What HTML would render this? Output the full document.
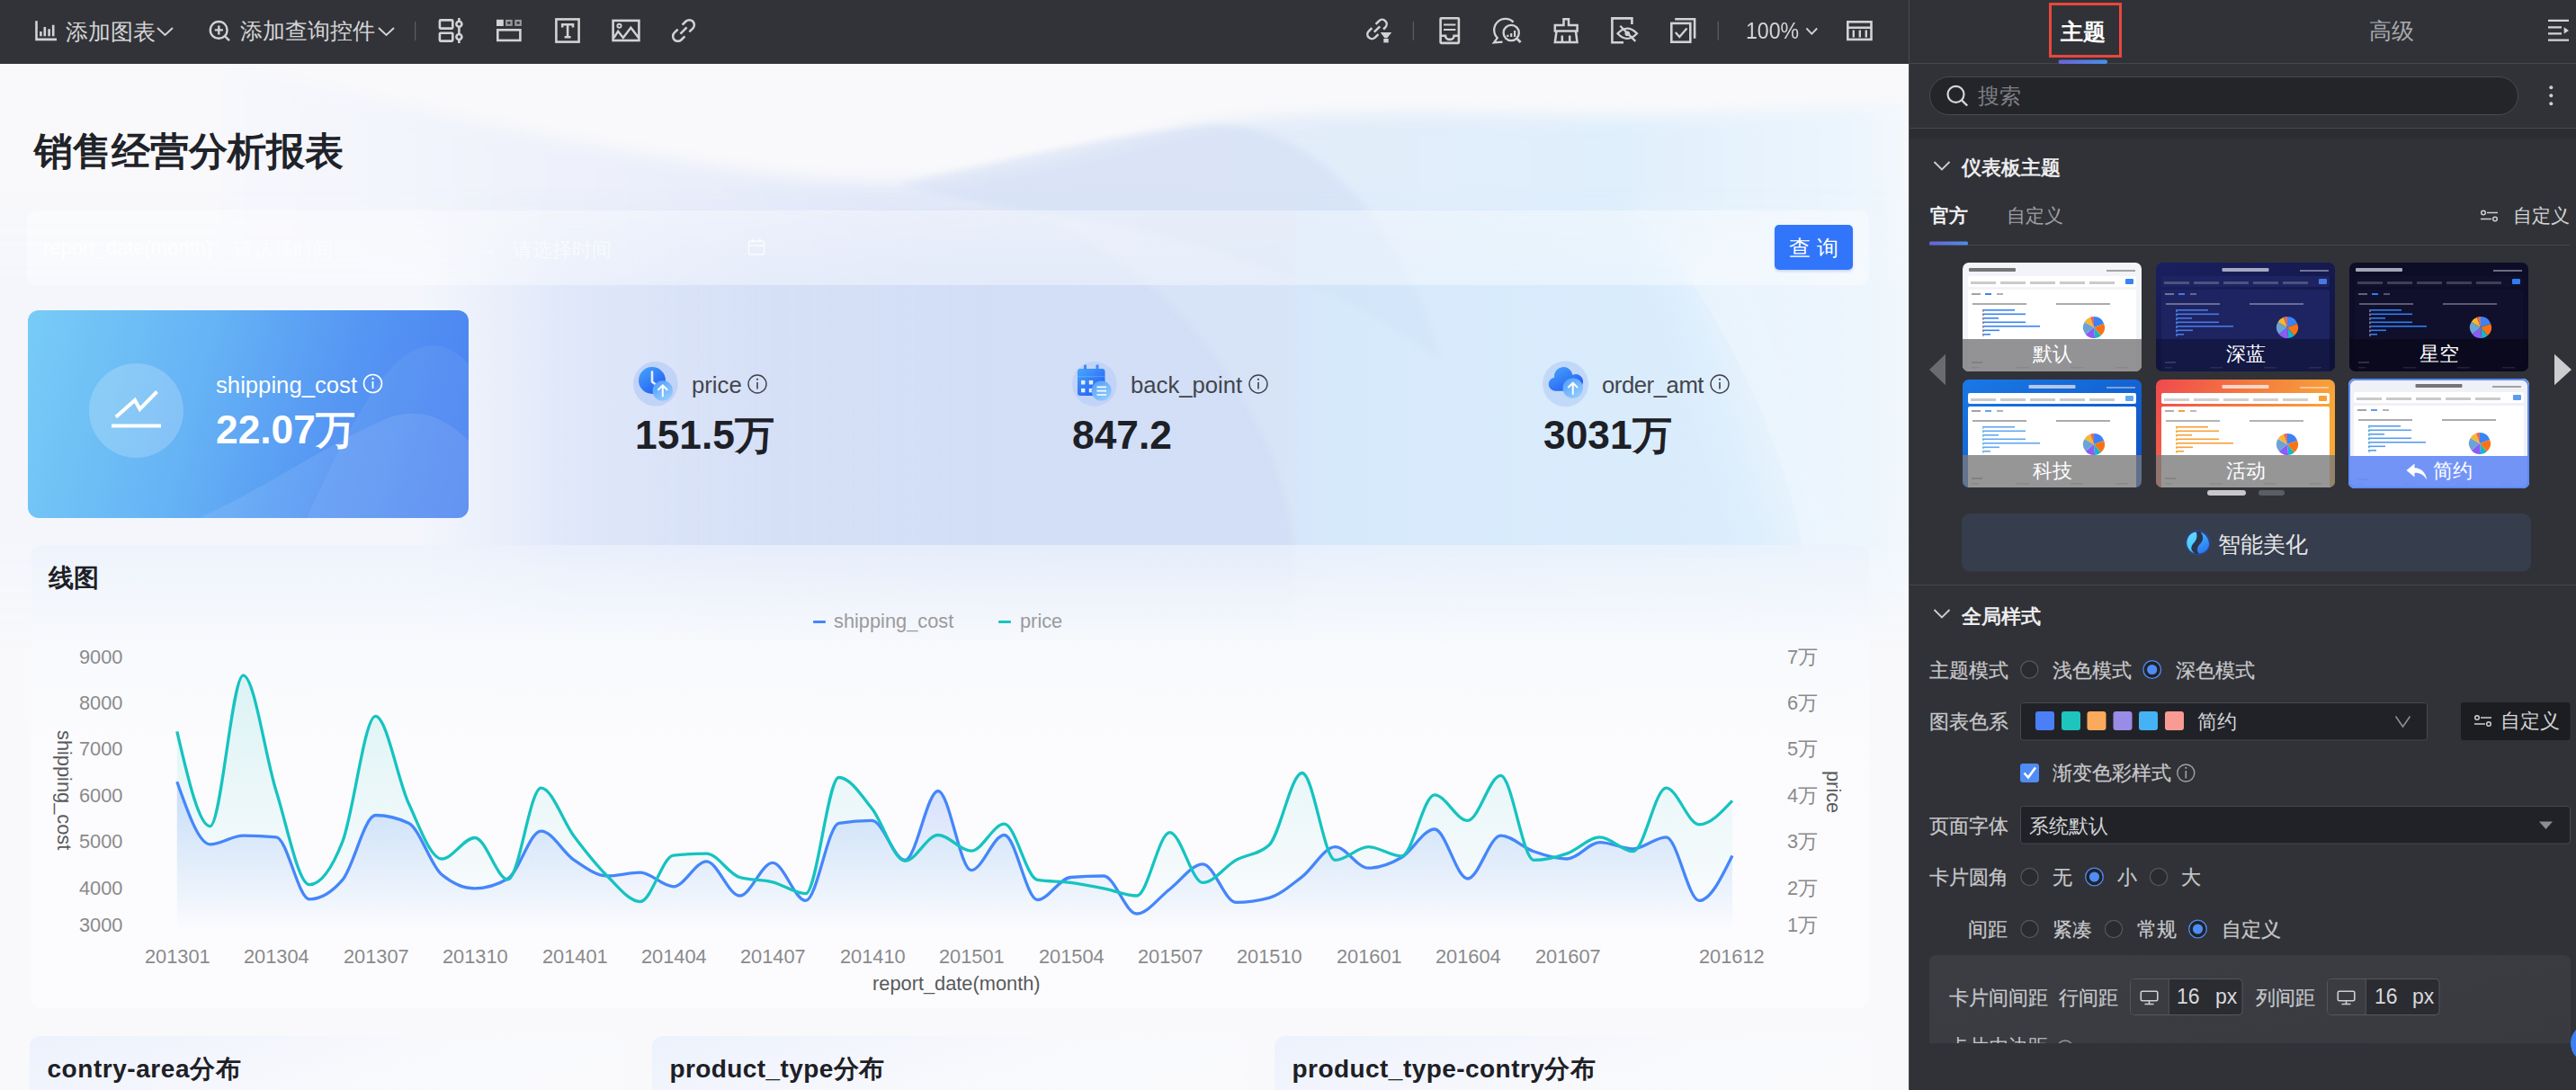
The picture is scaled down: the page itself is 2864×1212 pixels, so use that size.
<!DOCTYPE html>
<html><head><meta charset="utf-8">
<style>
*{box-sizing:border-box;margin:0;padding:0}
html,body{width:2864px;height:1212px;overflow:hidden;font-family:"Liberation Sans",sans-serif;background:#f9f9fb}
.a{position:absolute;white-space:nowrap}
.tb{color:#d4d4d6;font-size:25px;line-height:36px}
#toolbar{position:absolute;left:0;top:0;width:2122px;height:70.5px;background:#323338}
#panel{position:absolute;left:2122px;top:0;width:742px;height:1212px;background:#313237;border-left:1px solid #4a4b50}
#dash{position:absolute;left:0;top:0;width:2122px;height:1212px;background:#f7f8fc;overflow:hidden}
.kname{font-size:25.7px;color:#333740}
.kval{font-size:44.3px;font-weight:bold;color:#1d2026}
.card{position:absolute;background:linear-gradient(160deg,rgba(236,241,252,0.95) 0%,rgba(248,249,253,0.9) 50%,rgba(250,250,252,0.9) 100%);border-radius:12px}
.ctitle{font-size:28px;font-weight:bold;color:#1d2026}
.axl{font-size:21.8px;color:#8a8a8c;line-height:26px}
</style></head><body>
<div id="dash">
  <svg class="a" style="left:0;top:0" width="2122" height="1212">
    <defs>
      <filter id="bl2" x="-20%" y="-20%" width="140%" height="140%"><feGaussianBlur stdDeviation="3"/></filter>
      <filter id="bl3" x="-30%" y="-30%" width="160%" height="160%"><feGaussianBlur stdDeviation="25"/></filter>
      <filter id="bl4" x="-10%" y="-30%" width="120%" height="160%"><feGaussianBlur stdDeviation="9"/></filter>
      <linearGradient id="band" x1="0" y1="0" x2="2122" y2="0" gradientUnits="userSpaceOnUse">
        <stop offset="0.22" stop-color="#f4f6fc"/>
        <stop offset="0.30" stop-color="#dfe7f9"/>
        <stop offset="0.40" stop-color="#d8e2f8"/>
        <stop offset="0.67" stop-color="#d7e3f7"/>
        <stop offset="0.70" stop-color="#dbeafb"/>
        <stop offset="0.85" stop-color="#e0effc"/>
        <stop offset="0.95" stop-color="#e8f4fd"/>
        <stop offset="1" stop-color="#f3f8fd"/>
      </linearGradient>
      <linearGradient id="vfade" x1="0" y1="0" x2="0" y2="1212" gradientUnits="userSpaceOnUse">
        <stop offset="0.17" stop-color="#fff" stop-opacity="0"/>
        <stop offset="0.26" stop-color="#fff" stop-opacity="1"/>
        <stop offset="0.50" stop-color="#fff" stop-opacity="1"/>
        <stop offset="0.60" stop-color="#fff" stop-opacity="0"/>
      </linearGradient>
      <mask id="mband"><rect x="0" y="0" width="2122" height="1212" fill="url(#vfade)"/></mask>
      <linearGradient id="head" x1="0" y1="0" x2="2122" y2="0" gradientUnits="userSpaceOnUse">
        <stop offset="0.12" stop-color="#f7f8fd"/>
        <stop offset="0.30" stop-color="#eef1fb"/>
        <stop offset="0.45" stop-color="#e4eaf9"/>
        <stop offset="0.62" stop-color="#e3ebf8"/>
        <stop offset="0.85" stop-color="#e0effc"/>
        <stop offset="0.97" stop-color="#ecf5fd"/>
        <stop offset="1" stop-color="#f4f8fd"/>
      </linearGradient>
      <linearGradient id="vhead" x1="0" y1="0" x2="0" y2="1212" gradientUnits="userSpaceOnUse">
        <stop offset="0.06" stop-color="#fff" stop-opacity="0.3"/>
        <stop offset="0.17" stop-color="#fff" stop-opacity="1"/>
        <stop offset="0.3" stop-color="#fff" stop-opacity="1"/>
      </linearGradient>
      <mask id="mhead"><rect x="0" y="0" width="2122" height="1212" fill="url(#vhead)"/></mask>
      <linearGradient id="hfade" x1="0" y1="0" x2="2122" y2="0" gradientUnits="userSpaceOnUse">
        <stop offset="0.33" stop-color="#fff" stop-opacity="0"/>
        <stop offset="0.52" stop-color="#fff" stop-opacity="1"/>
      </linearGradient>
      <mask id="mleft"><rect x="0" y="0" width="2122" height="1212" fill="url(#hfade)"/></mask>
    </defs>
    <rect x="0" y="0" width="2122" height="1212" fill="#f9f9fb"/>
    <path d="M250,70 C500,130 800,200 972,203 C1100,204 1230,165 1325,141 C1420,125 1560,125 1700,128 C1900,132 2050,120 2122,112 L2122,340 L250,340 Z" fill="url(#head)" filter="url(#bl4)"/>
    <rect x="0" y="180" width="2122" height="560" fill="url(#band)" mask="url(#mband)"/>
    <g mask="url(#mleft)">
      <path d="M600,260 C850,240 1000,232 1144,235 C1300,300 1420,450 1439,610 L1439,700 L600,700 Z" fill="#c9d7f3" opacity="0.35" filter="url(#bl2)" mask="url(#mband)"/>
      <path d="M1000,205 C1150,170 1250,150 1325,141 C1430,125 1540,200 1601,400 C1500,320 1300,250 1144,235 C1080,225 1040,215 1000,205 Z" fill="#cfdcf4" opacity="0.45" filter="url(#bl2)"/>
    </g>
    <path d="M1440,136 C1560,128 1640,128 1700,136 C1800,190 1900,320 1955,450 C1985,520 1998,570 2005,620 L1440,620 Z" fill="#d2e9fc" opacity="0.45" mask="url(#mband)"/>
    <path d="M1751,157 C1850,250 1900,350 1925,446 C1960,560 1980,600 1990,640 L2122,640 L2122,150 Z" fill="#eef6fd" opacity="0.6" filter="url(#bl3)" mask="url(#mband)"/>
  </svg>

  <div class="a" style="left:38px;top:140px;font-size:43px;font-weight:bold;color:#1f2329">销售经营分析报表</div>

  <!-- filter bar -->
  <div class="a" style="left:30px;top:234px;width:2048px;height:83px;background:rgba(255,255,255,0.38);border-radius:10px"></div>
  <div class="a" style="left:48px;top:263px;font-size:22px;color:rgba(255,255,255,0.95)">report_date(month)</div>
  <div class="a" style="left:260px;top:263px;font-size:22px;color:rgba(255,255,255,0.6)">请选择时间</div>
  <div class="a" style="left:531px;top:263px;font-size:22px;color:rgba(255,255,255,0.6)">→</div>
  <div class="a" style="left:570px;top:263px;font-size:22px;color:rgba(255,255,255,0.6)">请选择时间</div>
  <svg class="a" style="left:831px;top:264px" width="20" height="22"><rect x="1.5" y="4" width="17" height="15" rx="1.5" fill="none" stroke="rgba(255,255,255,0.75)" stroke-width="1.5"/><path d="M1.5,9 H18.5 M6,1.5 V5.5 M14,1.5 V5.5" stroke="rgba(255,255,255,0.75)" stroke-width="1.5"/></svg>
  <div class="a" style="left:1973px;top:250px;width:87px;height:50px;background:#3175fb;border-radius:5px;box-shadow:0 2px 3px rgba(40,90,200,0.2);color:#fff;font-size:24px;line-height:52px;text-align:center;letter-spacing:7px;text-indent:7px">查询</div>

  <!-- KPI 1 -->
  <div class="a" style="left:31px;top:345px;width:490px;height:231px;border-radius:12px;overflow:hidden;background:linear-gradient(105deg,#77ccf6 0%,#66b3f5 38%,#5596f3 68%,#4a82f1 100%)">
    <svg class="a" style="left:0;top:0" width="490" height="231">
      <path d="M190,231 C260,200 330,150 400,120 C440,105 470,125 490,145 L490,231 Z" fill="rgba(255,255,255,0.09)"/>
      <path d="M310,231 C360,120 400,50 440,40 C465,35 480,50 490,60 L490,231 Z" fill="rgba(255,255,255,0.06)"/>
      <rect x="0" y="0" width="490" height="231" fill="rgba(90,110,230,0.0)"/>
    </svg>
  </div>
  <div class="a" style="left:98.5px;top:404px;width:105px;height:105px;border-radius:50%;background:rgba(255,255,255,0.2)"></div>
  <svg class="a" style="left:0;top:0" width="300" height="600"><polyline points="128.8,463.7 150,445 155.5,455 174.5,435.5" fill="none" stroke="#fff" stroke-width="4"/><line x1="124" y1="473.5" x2="179" y2="473.5" stroke="#fff" stroke-width="4.2"/></svg>
  <div class="a kname" style="left:240px;top:414px;color:#fff">shipping_cost</div>
  <svg class="a" style="left:403px;top:415px" width="23" height="23"><circle cx="11.5" cy="11.5" r="10" fill="none" stroke="#fff" stroke-width="1.6"/><line x1="11.5" y1="9" x2="11.5" y2="17" stroke="#fff" stroke-width="1.8"/><circle cx="11.5" cy="6" r="1.2" fill="#fff"/></svg>
  <div class="a kval" style="left:240px;top:448.3px;color:#fff">22.07万</div>

  <!-- KPI 2..4 -->
  <svg class="a" style="left:0;top:0" width="2122" height="600">
    <defs>
      <linearGradient id="ic1" x1="0" y1="0" x2="0.8" y2="1"><stop offset="0" stop-color="#47a8fb"/><stop offset="1" stop-color="#2358f4"/></linearGradient>
      <linearGradient id="ic2" x1="0" y1="0" x2="0.7" y2="1"><stop offset="0" stop-color="#4b9cfb"/><stop offset="1" stop-color="#93ccff"/></linearGradient>
    </defs>
    <circle cx="728.9" cy="426.8" r="24.8" fill="#c2d3f8"/>
    <circle cx="725" cy="423" r="15" fill="url(#ic1)"/>
    <path d="M725,413.5 V424.5 L729,427.5" fill="none" stroke="#e4f1ff" stroke-width="2.6" stroke-linecap="round" stroke-linejoin="round"/>
    <circle cx="736.8" cy="434.5" r="11.2" fill="url(#ic2)" opacity="0.97"/>
    <path d="M736.8,440.5 V428.8 M732,433.2 L736.8,428.5 L741.6,433.2" fill="none" stroke="#fff" stroke-width="2" stroke-linecap="round"/>

    <circle cx="1216.9" cy="426.9" r="24.8" fill="#c2d3f8"/>
    <path d="M1201,410 H1225.5 A3,3 0 0 1 1228.5,413 V437 A3,3 0 0 1 1225.5,440 H1201 A3,3 0 0 1 1198,437 V413 A3,3 0 0 1 1201,410 Z" fill="url(#ic1)"/>
    <rect x="1205" y="405.5" width="3" height="6" rx="1" fill="#3b8cf7"/><rect x="1218.5" y="405.5" width="3" height="6" rx="1" fill="#3b8cf7"/>
    <path d="M1198,418.7 H1228.5" stroke="#e8f1ff" stroke-width="0.6" opacity="0.4"/>
    <rect x="1202" y="423" width="4.4" height="4.5" fill="#e3eeff"/><rect x="1210.8" y="423" width="4.4" height="4.5" fill="#e3eeff"/>
    <rect x="1202" y="431.9" width="4.4" height="4.4" fill="#e3eeff"/><rect x="1210.8" y="431.9" width="4.4" height="4.4" fill="#e3eeff"/>
    <circle cx="1224.6" cy="434.6" r="11" fill="url(#ic2)"/>
    <path d="M1219.5,430.3 H1230 M1219.5,434.6 H1230 M1219.5,439 H1230" stroke="#fff" stroke-width="1.7"/>

    <circle cx="1740.5" cy="426.9" r="25.4" fill="#c2d8f8"/>
    <path d="M1729,434.7 A7.5,7.5 0 0 1 1728,419.8 A10,10 0 0 1 1748.5,417 A8,8 0 0 1 1759.5,427 A7.5,7.5 0 0 1 1752,434.7 Z" fill="url(#ic1)"/>
    <circle cx="1748.75" cy="431.6" r="11.2" fill="url(#ic2)"/>
    <path d="M1748.75,438 V426 M1744,430.5 L1748.75,425.7 L1753.5,430.5" fill="none" stroke="#fff" stroke-width="2" stroke-linecap="round"/>
  </svg>
<svg class="a" style="left:830.4px;top:414.8px" width="24" height="24"><circle cx="12" cy="12" r="10" fill="none" stroke="#3e4149" stroke-width="1.4"/><line x1="12" y1="10" x2="12" y2="17.5" stroke="#3e4149" stroke-width="1.6"/><circle cx="12" cy="6.8" r="1.1" fill="#3e4149"/></svg><svg class="a" style="left:1386.5px;top:414.6px" width="24" height="24"><circle cx="12" cy="12" r="10" fill="none" stroke="#3e4149" stroke-width="1.4"/><line x1="12" y1="10" x2="12" y2="17.5" stroke="#3e4149" stroke-width="1.6"/><circle cx="12" cy="6.8" r="1.1" fill="#3e4149"/></svg><svg class="a" style="left:1900px;top:414.7px" width="24" height="24"><circle cx="12" cy="12" r="10" fill="none" stroke="#3e4149" stroke-width="1.4"/><line x1="12" y1="10" x2="12" y2="17.5" stroke="#3e4149" stroke-width="1.6"/><circle cx="12" cy="6.8" r="1.1" fill="#3e4149"/></svg>
  <div class="a kname" style="left:769px;top:414px;color:#42454c">price</div>
  <div class="a kval" style="left:706px;top:454px">151.5万</div>
  <div class="a kname" style="left:1257px;top:414px;color:#42454c">back_point</div>
  <div class="a kval" style="left:1192px;top:458.7px">847.2</div>
  <div class="a kname" style="left:1781px;top:414px;color:#42454c;letter-spacing:-0.45px">order_amt</div>
  <div class="a kval" style="left:1716px;top:454px">3031万</div>
  <!-- chart card -->
  <div class="card" style="left:35px;top:605.5px;width:2043px;height:515px;background:linear-gradient(180deg,rgba(236,242,252,0.75) 0%,rgba(248,250,253,0.8) 22%,rgba(252,252,254,0.88) 45%,rgba(252,252,254,0.9) 100%)"></div>
  <div class="a ctitle" style="left:53.5px;top:624px">线图</div>
  <svg class="a" style="left:0;top:0" width="2122" height="1212">
    <defs>
      <linearGradient id="gb" x1="0" y1="0" x2="0" y2="1"><stop offset="0" stop-color="#4a7ef5" stop-opacity="0.22"/><stop offset="1" stop-color="#4a7ef5" stop-opacity="0.0"/></linearGradient>
      <linearGradient id="gt" x1="0" y1="0" x2="0" y2="1"><stop offset="0" stop-color="#1fc0bd" stop-opacity="0.14"/><stop offset="1" stop-color="#1fc0bd" stop-opacity="0.0"/></linearGradient>
    </defs>
    <path d="M196.8,869.2 C209.1,904.0 221.3,938.8 233.6,938.8 C245.9,938.8 258.1,929.1 270.4,929.1 C282.6,929.1 294.9,929.7 307.2,930.9 C319.4,932.1 331.7,999.9 344.0,999.9 C356.2,999.9 368.5,992.7 380.8,978.4 C393.0,964.1 405.3,906.5 417.5,906.5 C429.8,906.5 442.1,909.4 454.3,915.3 C466.6,921.2 478.9,962.5 491.1,972.6 C503.4,982.7 515.7,987.8 527.9,987.8 C540.2,987.8 552.5,984.2 564.7,977.0 C577.0,969.8 589.2,924.1 601.5,924.1 C613.8,924.1 626.0,948.1 638.3,956.4 C650.6,964.7 662.8,974.0 675.1,974.0 C687.4,974.0 699.6,970.2 711.9,970.2 C724.1,970.2 736.4,985.8 748.7,985.8 C760.9,985.8 773.2,957.9 785.5,957.9 C797.7,957.9 810.0,996.0 822.3,996.0 C834.5,996.0 846.8,959.4 859.0,959.4 C871.3,959.4 883.6,1001.4 895.8,1001.4 C908.1,1001.4 920.4,917.2 932.6,915.3 C944.9,913.4 957.2,912.4 969.4,912.4 C981.7,912.4 993.9,956.4 1006.2,956.4 C1018.5,956.4 1030.7,879.5 1043.0,879.5 C1055.3,879.5 1067.5,967.6 1079.8,967.6 C1092.1,967.6 1104.3,928.5 1116.6,928.5 C1128.9,928.5 1141.1,1000.5 1153.4,1000.5 C1165.6,1000.5 1177.9,976.5 1190.2,975.5 C1202.4,974.5 1214.7,974.0 1227.0,974.0 C1239.2,974.0 1251.5,1016.0 1263.8,1016.0 C1276.0,1016.0 1288.3,997.9 1300.5,988.7 C1312.8,979.5 1325.1,960.8 1337.3,960.8 C1349.6,960.8 1361.9,1003.4 1374.1,1003.4 C1386.4,1003.4 1398.7,1001.7 1410.9,998.4 C1423.2,995.1 1435.4,984.3 1447.7,974.9 C1460.0,965.5 1472.2,941.7 1484.5,941.7 C1496.8,941.7 1509.0,965.2 1521.3,965.2 C1533.6,965.2 1545.8,960.7 1558.1,953.5 C1570.3,946.3 1582.6,922.0 1594.9,922.0 C1607.1,922.0 1619.4,977.0 1631.7,977.0 C1643.9,977.0 1656.2,929.1 1668.5,929.1 C1680.7,929.1 1693.0,942.4 1705.3,946.7 C1717.5,951.0 1729.8,955.0 1742.0,955.0 C1754.3,955.0 1766.6,936.7 1778.8,936.7 C1791.1,936.7 1803.4,943.8 1815.6,943.8 C1827.9,943.8 1840.2,930.9 1852.4,930.9 C1864.7,930.9 1876.9,1001.4 1889.2,1001.4 C1901.5,1001.4 1913.7,976.4 1926.0,951.4 L1926,1036 L196.8,1036 Z" fill="url(#gb)"/>
    <path d="M196.8,813.4 C209.1,866.1 221.3,918.8 233.6,918.8 C245.9,918.8 258.1,750.8 270.4,750.8 C282.6,750.8 294.9,841.2 307.2,880.0 C319.4,918.8 331.7,983.7 344.0,983.7 C356.2,983.7 368.5,967.1 380.8,935.9 C393.0,904.7 405.3,796.4 417.5,796.4 C429.8,796.4 442.1,866.9 454.3,893.3 C466.6,919.7 478.9,955.0 491.1,955.0 C503.4,955.0 515.7,931.5 527.9,931.5 C540.2,931.5 552.5,977.9 564.7,977.9 C577.0,977.9 589.2,876.2 601.5,876.2 C613.8,876.2 626.0,913.7 638.3,930.0 C650.6,946.3 662.8,961.9 675.1,974.0 C687.4,986.1 699.6,1002.5 711.9,1002.5 C724.1,1002.5 736.4,952.4 748.7,951.1 C760.9,949.8 773.2,949.1 785.5,949.1 C797.7,949.1 810.0,972.0 822.3,975.5 C834.5,979.0 846.8,977.8 859.0,980.8 C871.3,983.8 883.6,993.7 895.8,993.7 C908.1,993.7 920.4,864.5 932.6,864.5 C944.9,864.5 957.2,883.6 969.4,899.1 C981.7,914.6 993.9,957.3 1006.2,957.3 C1018.5,957.3 1030.7,928.5 1043.0,928.5 C1055.3,928.5 1067.5,946.1 1079.8,946.1 C1092.1,946.1 1104.3,916.2 1116.6,916.2 C1128.9,916.2 1141.1,976.4 1153.4,978.4 C1165.6,980.4 1177.9,979.8 1190.2,981.4 C1202.4,983.0 1214.7,985.4 1227.0,987.8 C1239.2,990.2 1251.5,996.0 1263.8,996.0 C1276.0,996.0 1288.3,925.6 1300.5,925.6 C1312.8,925.6 1325.1,981.4 1337.3,981.4 C1349.6,981.4 1361.9,963.3 1374.1,956.4 C1386.4,949.5 1398.7,950.8 1410.9,939.7 C1423.2,928.6 1435.4,859.5 1447.7,859.5 C1460.0,859.5 1472.2,956.4 1484.5,956.4 C1496.8,956.4 1509.0,941.7 1521.3,941.7 C1533.6,941.7 1545.8,952.0 1558.1,952.0 C1570.3,952.0 1582.6,883.9 1594.9,883.9 C1607.1,883.9 1619.4,912.4 1631.7,912.4 C1643.9,912.4 1656.2,862.4 1668.5,862.4 C1680.7,862.4 1693.0,956.4 1705.3,956.4 C1717.5,956.4 1729.8,953.4 1742.0,949.1 C1754.3,944.9 1766.6,930.9 1778.8,930.9 C1791.1,930.9 1803.4,946.7 1815.6,946.7 C1827.9,946.7 1840.2,876.2 1852.4,876.2 C1864.7,876.2 1876.9,916.8 1889.2,916.8 C1901.5,916.8 1913.7,903.5 1926.0,890.3 L1926,1036 L196.8,1036 Z" fill="url(#gt)"/>
    <path d="M196.8,869.2 C209.1,904.0 221.3,938.8 233.6,938.8 C245.9,938.8 258.1,929.1 270.4,929.1 C282.6,929.1 294.9,929.7 307.2,930.9 C319.4,932.1 331.7,999.9 344.0,999.9 C356.2,999.9 368.5,992.7 380.8,978.4 C393.0,964.1 405.3,906.5 417.5,906.5 C429.8,906.5 442.1,909.4 454.3,915.3 C466.6,921.2 478.9,962.5 491.1,972.6 C503.4,982.7 515.7,987.8 527.9,987.8 C540.2,987.8 552.5,984.2 564.7,977.0 C577.0,969.8 589.2,924.1 601.5,924.1 C613.8,924.1 626.0,948.1 638.3,956.4 C650.6,964.7 662.8,974.0 675.1,974.0 C687.4,974.0 699.6,970.2 711.9,970.2 C724.1,970.2 736.4,985.8 748.7,985.8 C760.9,985.8 773.2,957.9 785.5,957.9 C797.7,957.9 810.0,996.0 822.3,996.0 C834.5,996.0 846.8,959.4 859.0,959.4 C871.3,959.4 883.6,1001.4 895.8,1001.4 C908.1,1001.4 920.4,917.2 932.6,915.3 C944.9,913.4 957.2,912.4 969.4,912.4 C981.7,912.4 993.9,956.4 1006.2,956.4 C1018.5,956.4 1030.7,879.5 1043.0,879.5 C1055.3,879.5 1067.5,967.6 1079.8,967.6 C1092.1,967.6 1104.3,928.5 1116.6,928.5 C1128.9,928.5 1141.1,1000.5 1153.4,1000.5 C1165.6,1000.5 1177.9,976.5 1190.2,975.5 C1202.4,974.5 1214.7,974.0 1227.0,974.0 C1239.2,974.0 1251.5,1016.0 1263.8,1016.0 C1276.0,1016.0 1288.3,997.9 1300.5,988.7 C1312.8,979.5 1325.1,960.8 1337.3,960.8 C1349.6,960.8 1361.9,1003.4 1374.1,1003.4 C1386.4,1003.4 1398.7,1001.7 1410.9,998.4 C1423.2,995.1 1435.4,984.3 1447.7,974.9 C1460.0,965.5 1472.2,941.7 1484.5,941.7 C1496.8,941.7 1509.0,965.2 1521.3,965.2 C1533.6,965.2 1545.8,960.7 1558.1,953.5 C1570.3,946.3 1582.6,922.0 1594.9,922.0 C1607.1,922.0 1619.4,977.0 1631.7,977.0 C1643.9,977.0 1656.2,929.1 1668.5,929.1 C1680.7,929.1 1693.0,942.4 1705.3,946.7 C1717.5,951.0 1729.8,955.0 1742.0,955.0 C1754.3,955.0 1766.6,936.7 1778.8,936.7 C1791.1,936.7 1803.4,943.8 1815.6,943.8 C1827.9,943.8 1840.2,930.9 1852.4,930.9 C1864.7,930.9 1876.9,1001.4 1889.2,1001.4 C1901.5,1001.4 1913.7,976.4 1926.0,951.4" fill="none" stroke="#4586fa" stroke-width="3.3"/>
    <path d="M196.8,813.4 C209.1,866.1 221.3,918.8 233.6,918.8 C245.9,918.8 258.1,750.8 270.4,750.8 C282.6,750.8 294.9,841.2 307.2,880.0 C319.4,918.8 331.7,983.7 344.0,983.7 C356.2,983.7 368.5,967.1 380.8,935.9 C393.0,904.7 405.3,796.4 417.5,796.4 C429.8,796.4 442.1,866.9 454.3,893.3 C466.6,919.7 478.9,955.0 491.1,955.0 C503.4,955.0 515.7,931.5 527.9,931.5 C540.2,931.5 552.5,977.9 564.7,977.9 C577.0,977.9 589.2,876.2 601.5,876.2 C613.8,876.2 626.0,913.7 638.3,930.0 C650.6,946.3 662.8,961.9 675.1,974.0 C687.4,986.1 699.6,1002.5 711.9,1002.5 C724.1,1002.5 736.4,952.4 748.7,951.1 C760.9,949.8 773.2,949.1 785.5,949.1 C797.7,949.1 810.0,972.0 822.3,975.5 C834.5,979.0 846.8,977.8 859.0,980.8 C871.3,983.8 883.6,993.7 895.8,993.7 C908.1,993.7 920.4,864.5 932.6,864.5 C944.9,864.5 957.2,883.6 969.4,899.1 C981.7,914.6 993.9,957.3 1006.2,957.3 C1018.5,957.3 1030.7,928.5 1043.0,928.5 C1055.3,928.5 1067.5,946.1 1079.8,946.1 C1092.1,946.1 1104.3,916.2 1116.6,916.2 C1128.9,916.2 1141.1,976.4 1153.4,978.4 C1165.6,980.4 1177.9,979.8 1190.2,981.4 C1202.4,983.0 1214.7,985.4 1227.0,987.8 C1239.2,990.2 1251.5,996.0 1263.8,996.0 C1276.0,996.0 1288.3,925.6 1300.5,925.6 C1312.8,925.6 1325.1,981.4 1337.3,981.4 C1349.6,981.4 1361.9,963.3 1374.1,956.4 C1386.4,949.5 1398.7,950.8 1410.9,939.7 C1423.2,928.6 1435.4,859.5 1447.7,859.5 C1460.0,859.5 1472.2,956.4 1484.5,956.4 C1496.8,956.4 1509.0,941.7 1521.3,941.7 C1533.6,941.7 1545.8,952.0 1558.1,952.0 C1570.3,952.0 1582.6,883.9 1594.9,883.9 C1607.1,883.9 1619.4,912.4 1631.7,912.4 C1643.9,912.4 1656.2,862.4 1668.5,862.4 C1680.7,862.4 1693.0,956.4 1705.3,956.4 C1717.5,956.4 1729.8,953.4 1742.0,949.1 C1754.3,944.9 1766.6,930.9 1778.8,930.9 C1791.1,930.9 1803.4,946.7 1815.6,946.7 C1827.9,946.7 1840.2,876.2 1852.4,876.2 C1864.7,876.2 1876.9,916.8 1889.2,916.8 C1901.5,916.8 1913.7,903.5 1926.0,890.3" fill="none" stroke="#16c3c0" stroke-width="3.3"/>
  </svg>
  <!-- legend -->
  <div class="a" style="left:904px;top:690px;width:14px;height:3px;background:#4586fa;border-radius:1px"></div>
  <div class="a axl" style="left:927px;top:678px;color:#9a9a9c">shipping_cost</div>
  <div class="a" style="left:1110px;top:690px;width:14px;height:3px;background:#16c3c0;border-radius:1px"></div>
  <div class="a axl" style="left:1134px;top:678px;color:#9a9a9c">price</div>
  <!-- y left -->
  <div class="a axl" style="left:88px;top:718px">9000</div>
  <div class="a axl" style="left:88px;top:769px">8000</div>
  <div class="a axl" style="left:88px;top:820px">7000</div>
  <div class="a axl" style="left:88px;top:872px">6000</div>
  <div class="a axl" style="left:88px;top:923px">5000</div>
  <div class="a axl" style="left:88px;top:975px">4000</div>
  <div class="a axl" style="left:88px;top:1016px">3000</div>
  <div class="a axl" style="left:84px;top:811.5px;transform:rotate(90deg);transform-origin:0 0;color:#58595c">shipping_cost</div>
  <!-- y right -->
  <div class="a axl" style="left:1987px;top:718px">7万</div>
  <div class="a axl" style="left:1987px;top:769px">6万</div>
  <div class="a axl" style="left:1987px;top:820px">5万</div>
  <div class="a axl" style="left:1987px;top:872px">4万</div>
  <div class="a axl" style="left:1987px;top:923px">3万</div>
  <div class="a axl" style="left:1987px;top:975px">2万</div>
  <div class="a axl" style="left:1987px;top:1016px">1万</div>
  <div class="a axl" style="left:2051px;top:857px;transform:rotate(90deg);transform-origin:0 0;color:#58595c">price</div>
  <!-- x labels -->
  <div class="a axl" style="left:161px;top:1051px">201301</div>
  <div class="a axl" style="left:271px;top:1051px">201304</div>
  <div class="a axl" style="left:382px;top:1051px">201307</div>
  <div class="a axl" style="left:492px;top:1051px">201310</div>
  <div class="a axl" style="left:603px;top:1051px">201401</div>
  <div class="a axl" style="left:713px;top:1051px">201404</div>
  <div class="a axl" style="left:823px;top:1051px">201407</div>
  <div class="a axl" style="left:934px;top:1051px">201410</div>
  <div class="a axl" style="left:1044px;top:1051px">201501</div>
  <div class="a axl" style="left:1155px;top:1051px">201504</div>
  <div class="a axl" style="left:1265px;top:1051px">201507</div>
  <div class="a axl" style="left:1375px;top:1051px">201510</div>
  <div class="a axl" style="left:1486px;top:1051px">201601</div>
  <div class="a axl" style="left:1596px;top:1051px">201604</div>
  <div class="a axl" style="left:1707px;top:1051px">201607</div>
  <div class="a axl" style="left:1889px;top:1051px">201612</div>
  <div class="a axl" style="left:970px;top:1080.5px;color:#58595c">report_date(month)</div>

  <!-- bottom cards -->
  <div class="card" style="left:33px;top:1152px;width:660px;height:100px"></div>
  <div class="card" style="left:725px;top:1152px;width:660px;height:100px"></div>
  <div class="card" style="left:1417px;top:1152px;width:661px;height:100px"></div>
  <div class="a ctitle" style="left:52.5px;top:1170px;letter-spacing:0.55px">contry-area分布</div>
  <div class="a ctitle" style="left:744.5px;top:1170px;letter-spacing:0.4px">product_type分布</div>
  <div class="a ctitle" style="left:1436.5px;top:1170px;letter-spacing:0.45px">product_type-contry分布</div>
</div>
<div id="toolbar">
  <svg class="a" style="left:0;top:0" width="2122" height="70" fill="none" stroke="#d2d2d4" stroke-width="2.6">
    <!-- bar chart -->
    <path d="M40.5,23.3 V43.9 H63"/>
    <path d="M45.4,35 V40.3 M49.8,30 V40.3 M54.6,32.2 V40.3 M59.2,27.7 V40.3"/>
    <path d="M175,31 L183.5,39 L192,31" stroke-width="2"/>
    <!-- zoom plus -->
    <circle cx="243.2" cy="33.4" r="9.4" stroke-width="2.4"/>
    <path d="M238.8,33.4 H247.9 M243.3,28.6 V38.6 M250.4,40.6 L255,45.2" stroke-width="2.4"/>
    <path d="M421,31 L429.5,39 L438,31" stroke-width="2"/>
    <path d="M461.6,24 V45" stroke="#5b5c61" stroke-width="1.3"/>
    <!-- layout -->
    <rect x="488.9" y="22.4" width="14.4" height="9.2" rx="1"/>
    <rect x="488.9" y="36.7" width="14.4" height="8.9" rx="1"/>
    <path d="M510.4,19.9 V23.4 M510.4,30 V37.6 M510.4,44.4 V47.9"/>
    <circle cx="510.4" cy="26.7" r="3"/><circle cx="510.4" cy="41" r="3"/>
    <!-- tabs -->
    <rect x="552" y="21.8" width="7.8" height="7.2" fill="#d2d2d4" stroke="none"/>
    <rect x="563.2" y="23" width="5.4" height="4.8" stroke="#9a9a9d" stroke-width="2.2"/>
    <rect x="573.4" y="23" width="5.4" height="4.8" stroke="#9a9a9d" stroke-width="2.2"/>
    <rect x="553.3" y="33.3" width="25.1" height="11.6"/>
    <!-- T -->
    <rect x="618.4" y="21.4" width="25.2" height="25.2"/>
    <path d="M625.2,30.5 V27.2 H637 V30.5 M631.1,27.2 V41.3 M627.6,41.3 H634.6"/>
    <!-- image -->
    <rect x="681.6" y="22.9" width="28.8" height="22.1"/>
    <circle cx="688.5" cy="28.8" r="2.1" stroke-width="1.9"/>
    <path d="M682.5,42 L687.2,34.8 L692.8,42 L701.4,30.8 L710,42" stroke-width="2.4"/>
    <!-- link -->
    <g transform="translate(760,34) rotate(-45)" stroke-width="2.5">
      <path d="M-3.5,-5.5 H-9 A5.5,5.5 0 0 0 -9,5.5 H-3.5"/>
      <path d="M3.5,-5.5 H9 A5.5,5.5 0 0 1 9,5.5 H3.5"/>
      <path d="M-5,0 H5"/>
    </g>
    <!-- link filter -->
    <g transform="translate(1531,32.5) rotate(-45)" stroke-width="2.5">
      <path d="M-3,-5 H-8 A5,5 0 0 0 -8,5 H-3"/>
      <path d="M3,-5 H8 A5,5 0 0 1 8,5 H5"/>
      <path d="M-4.5,0 H4.5"/>
    </g>
    <path d="M1534.7,36 H1547.2 L1542.4,42.2 H1539.4 Z" fill="#d2d2d4" stroke="none"/>
    <rect x="1538.3" y="43" width="5.4" height="4.4" fill="#d2d2d4" stroke="none"/>
    <path d="M1571.4,24 V44.8" stroke="#5b5c61" stroke-width="1.3"/>
    <!-- doc tray -->
    <rect x="1601.6" y="20.3" width="20.3" height="27.6" rx="0.8"/>
    <path d="M1605,27.5 H1618.4 M1605,33 H1618.4" stroke-width="2.2"/>
    <path d="M1601.6,39.7 H1607 A4.8,4.2 0 0 0 1616.6,39.7 H1622"/>
    <!-- chat chart -->
    <path d="M1682.6,24.6 A12.4,12.4 0 1 0 1664.8,42.2 L1661,47.3 L1670.5,46.6" stroke-width="2.3"/>
    <circle cx="1680.2" cy="36.5" r="8.6" stroke-width="2.4"/>
    <path d="M1676.3,38.8 V41 M1680.2,37 V41 M1684.1,34 V41" stroke-width="2.2"/>
    <path d="M1686.6,43 L1690.6,47" stroke-width="2.8"/>
    <!-- brush -->
    <path d="M1738.5,28 V21.2 H1744 V28 H1753.6 V34.5 H1728.8 V28 Z" stroke-width="2.5"/>
    <path d="M1730.5,35 L1728.8,47 H1753.5 L1752,35 M1736.8,46.5 V39.5 M1745.2,46.5 V39.5" stroke-width="2.5"/>
    <!-- eye off -->
    <path d="M1805,47.3 H1792.4 V20.4 H1814.4 V27" stroke-width="2.6"/>
    <path d="M1798.5,37.3 Q1809,26 1820,37.3 Q1809,48.5 1798.5,37.3 Z" stroke-width="2.3"/>
    <circle cx="1809.3" cy="37.3" r="2.8" fill="#d2d2d4" stroke="none"/>
    <path d="M1801.3,28.8 L1818.3,45.9" stroke-width="2.3"/>
    <!-- check stack -->
    <rect x="1858.3" y="25.9" width="21" height="20.8"/>
    <path d="M1862.2,21.3 H1884.1 V42.7"/>
    <path d="M1862.8,36 L1867.3,41 L1875.5,31.5" stroke-width="2.3"/>
    <path d="M1910.3,24 V44.8" stroke="#5b5c61" stroke-width="1.3"/>
    <path d="M2008.4,31.5 L2014.3,37.6 L2020.2,31.5" stroke-width="1.8"/>
    <!-- table -->
    <rect x="2054.3" y="24.3" width="26.2" height="19.6"/>
    <path d="M2054.3,30.8 H2080.5 M2060.8,33.4 V41.5 M2067.8,33.4 V41.5 M2074.8,33.4 V41.5" stroke-width="2.4"/>
  </svg>
  <div class="a tb" style="left:72.5px;top:16.5px;font-size:25px">添加图表</div>
  <div class="a tb" style="left:266.5px;top:16.5px;font-size:24.6px">添加查询控件</div>
  <div class="a tb" style="left:1941px;top:16px;font-size:26px;transform:scaleX(0.89);transform-origin:0 0">100%</div>
</div>
<div id="panel"></div>
<svg class="a" style="left:0;top:0" width="2864" height="1212" fill="none"><defs><linearGradient id="ul" x1="0" x2="1"><stop offset="0" stop-color="#6b63d6"/><stop offset="1" stop-color="#4a8fe6"/></linearGradient></defs><path d="M2122,70.5 H2864" stroke="#46474c" stroke-width="1"/><rect x="2279.5" y="4.5" width="78" height="58" stroke="#e8473d" stroke-width="3"/><rect x="2288.6" y="66.5" width="54.4" height="4.5" rx="2" fill="url(#ul)"/><path d="M2833,22.8 H2856 M2833,30.3 H2848 M2833,37.4 H2848 M2833,44.7 H2856" stroke="#d4d4d6" stroke-width="2.2"/><path d="M2850.7,30.3 L2856,34 L2850.7,37.6 Z" fill="#d4d4d6"/><rect x="2145.5" y="85.5" width="654" height="42" rx="21" fill="#242529" stroke="#4a4b50" stroke-width="1"/><circle cx="2174.5" cy="104.8" r="9" stroke="#d6d6d8" stroke-width="2.2"/><path d="M2181,111.3 L2187.2,117.5" stroke="#d6d6d8" stroke-width="2.4"/><circle cx="2836.3" cy="97.3" r="2" fill="#cfcfd1"/><circle cx="2836.3" cy="106.3" r="2" fill="#cfcfd1"/><circle cx="2836.3" cy="115.3" r="2" fill="#cfcfd1"/><rect x="2123" y="143" width="741" height="11" fill="#2b2d31"/><path d="M2122,142.5 H2864" stroke="#46474c" stroke-width="1"/><path d="M2150.5,180 L2159,188.5 L2167.5,180" stroke="#d0d0d2" stroke-width="1.8"/><path d="M2150.5,678 L2159,686.5 L2167.5,678" stroke="#d0d0d2" stroke-width="1.8"/><path d="M2145,272.5 H2857" stroke="#45464b" stroke-width="1"/><rect x="2145" y="268.5" width="43" height="4" rx="1.5" fill="url(#ul)"/><circle cx="2761" cy="236.5" r="2.3" stroke="#cfcfd1" stroke-width="1.5"/><path d="M2765,236.5 H2777 M2758,243.5 H2770" stroke="#cfcfd1" stroke-width="1.6"/><circle cx="2774" cy="243.5" r="2.3" stroke="#cfcfd1" stroke-width="1.5"/><path d="M2163,393.7 V428.2 L2145,411 Z" fill="#6a6b6f"/><path d="M2840,393.7 V428.2 L2859,411 Z" fill="#cdcdcf"/><rect x="2454" y="545" width="43" height="6" rx="3" fill="#c8c8ca"/><rect x="2511" y="545" width="29" height="6" rx="3" fill="#5d5e63"/><rect x="2181" y="571" width="633" height="64.5" rx="9" fill="#363d4c"/><defs><linearGradient id="ai" x1="0" y1="0" x2="1" y2="1"><stop offset="0" stop-color="#5ec2ff"/><stop offset="1" stop-color="#2a62e8"/></linearGradient></defs><defs><linearGradient id="ai1" x1="0" y1="0" x2="0.3" y2="1"><stop offset="0" stop-color="#6cd9ff"/><stop offset="1" stop-color="#3ec8fb"/></linearGradient><linearGradient id="ai2" x1="0" y1="0" x2="0.3" y2="1"><stop offset="0" stop-color="#45b8ff"/><stop offset="1" stop-color="#2a78f2"/></linearGradient></defs><g transform="translate(2443.6,603.3)"><circle r="14" fill="#2e4590"/><circle r="12.6" fill="#2b3550"/><path d="M-2,-11.9 C-8.5,-11.5 -12.5,-5 -12.3,1 C-12,6 -8.5,10.5 -3.5,12 C-8,9 -8.5,5 -5,1 C-1.5,-2.5 0,-7 -2,-11.9 Z" fill="url(#ai1)"/><path d="M3,-11.6 C8.5,-10 12.6,-4.5 12.4,2 C12,8 7,12.3 1,12.2 C-1.5,9 -1,5 2.5,1.5 C6,-2 7,-7 3,-11.6 Z" fill="url(#ai2)"/></g><path d="M2122,650.5 H2864" stroke="#45464b" stroke-width="1"/><circle cx="2256.3" cy="744.5" r="9.6" fill="#2a2b2f" stroke="#56575c" stroke-width="1.2"/><circle cx="2392.7" cy="744.5" r="9.8" fill="#222327" stroke="#4f8cf6" stroke-width="1.3"/><circle cx="2392.7" cy="744.5" r="5.6" fill="#4f8cf6"/><rect x="2246.5" y="781.5" width="452" height="41.5" rx="3" fill="#212227" stroke="#48494e" stroke-width="1"/><rect x="2263" y="791" width="21" height="21" rx="3" fill="#4a7ff7"/><rect x="2292" y="791" width="21" height="21" rx="3" fill="#1ec5be"/><rect x="2320.5" y="791" width="21" height="21" rx="3" fill="#fbaa5c"/><rect x="2349.5" y="791" width="21" height="21" rx="3" fill="#9a8be6"/><rect x="2378" y="791" width="21" height="21" rx="3" fill="#45b2f5"/><rect x="2407" y="791" width="21" height="21" rx="3" fill="#fa9b93"/><path d="M2663.5,796.5 L2671.5,808 L2679.5,796.5" stroke="#8c8d91" stroke-width="1.6"/><rect x="2736" y="781" width="121.5" height="42" rx="3" fill="#1c1d21"/><circle cx="2754" cy="798" r="2.3" stroke="#cfcfd1" stroke-width="1.5"/><path d="M2758,798 H2770 M2751,805 H2763" stroke="#cfcfd1" stroke-width="1.6"/><circle cx="2767" cy="805" r="2.3" stroke="#cfcfd1" stroke-width="1.5"/><rect x="2246" y="849" width="21" height="21" rx="3" fill="#4f8cf6"/><path d="M2250.5,859.5 L2255,864.5 L2263,853.5" stroke="#fff" stroke-width="2.6"/><circle cx="2430.3" cy="859.5" r="9.5" stroke="#a0a1a5" stroke-width="1.4"/><path d="M2430.3,857 V865.5" stroke="#a0a1a5" stroke-width="1.6"/><circle cx="2430.3" cy="853.8" r="1.1" fill="#a0a1a5"/><rect x="2246.5" y="896.5" width="611" height="41.5" rx="3" fill="#212227" stroke="#48494e" stroke-width="1"/><path d="M2823,913.5 H2838 L2830.5,922 Z" fill="#8c8d91"/><circle cx="2256.5" cy="975" r="9.6" fill="#2a2b2f" stroke="#56575c" stroke-width="1.2"/><circle cx="2328.5" cy="975" r="9.8" fill="#222327" stroke="#4f8cf6" stroke-width="1.3"/><circle cx="2328.5" cy="975" r="5.6" fill="#4f8cf6"/><circle cx="2400" cy="975" r="9.6" fill="#2a2b2f" stroke="#56575c" stroke-width="1.2"/><circle cx="2256.5" cy="1033" r="9.6" fill="#2a2b2f" stroke="#56575c" stroke-width="1.2"/><circle cx="2350" cy="1033" r="9.6" fill="#2a2b2f" stroke="#56575c" stroke-width="1.2"/><circle cx="2443.5" cy="1033" r="9.8" fill="#222327" stroke="#4f8cf6" stroke-width="1.3"/><circle cx="2443.5" cy="1033" r="5.6" fill="#4f8cf6"/><defs><linearGradient id="sp" x1="0" y1="0" x2="1" y2="1"><stop offset="0" stop-color="#3b3d43"/><stop offset="1" stop-color="#383a40"/></linearGradient><clipPath id="spc"><rect x="2145" y="1062" width="713" height="98"/></clipPath></defs><g clip-path="url(#spc)"><rect x="2145" y="1062" width="713" height="140" rx="7" fill="url(#sp)"/><rect x="2368.5" y="1088.5" width="124.5" height="40" rx="4" fill="#2b2c31" stroke="#56575c" stroke-width="1"/><path d="M2372.5,1089 H2411 V1128 H2372.5 A4,4 0 0 1 2369,1124 V1093 A4,4 0 0 1 2372.5,1089 Z" fill="#3a3c42"/><path d="M2411.3,1088.5 V1128.5" stroke="#56575c" stroke-width="1"/><rect x="2380.3" y="1102.3" width="18.5" height="10.5" rx="1.5" stroke="#cfcfd1" stroke-width="1.6"/><path d="M2389.5,1113 V1116.5 M2384.5,1116.5 H2394.5" stroke="#cfcfd1" stroke-width="1.6"/><rect x="2587.5" y="1088.5" width="124.5" height="40" rx="4" fill="#2b2c31" stroke="#56575c" stroke-width="1"/><path d="M2591.5,1089 H2630 V1128 H2591.5 A4,4 0 0 1 2588,1124 V1093 A4,4 0 0 1 2591.5,1089 Z" fill="#3a3c42"/><path d="M2630.3,1088.5 V1128.5" stroke="#56575c" stroke-width="1"/><rect x="2599.3" y="1102.3" width="18.5" height="10.5" rx="1.5" stroke="#cfcfd1" stroke-width="1.6"/><path d="M2608.5,1113 V1116.5 M2603.5,1116.5 H2613.5" stroke="#cfcfd1" stroke-width="1.6"/><circle cx="2296" cy="1166" r="9" stroke="#9a9ba0" stroke-width="1.4"/></g><circle cx="2880" cy="1160" r="22" fill="#3d7ff5"/></svg>
<svg class="a" style="left:0;top:0" width="1" height="1"><defs><linearGradient id="gOr" x1="0" y1="0" x2="1" y2="0.3"><stop offset="0" stop-color="#f0494f"/><stop offset="0.5" stop-color="#f47a3e"/><stop offset="1" stop-color="#f7a93a"/></linearGradient><linearGradient id="gBl" x1="0" y1="0" x2="1" y2="1"><stop offset="0" stop-color="#1a78e6"/><stop offset="1" stop-color="#0d4fc0"/></linearGradient><linearGradient id="gNv" x1="0" y1="0" x2="1" y2="1"><stop offset="0" stop-color="#1a2060"/><stop offset="1" stop-color="#10143f"/></linearGradient></defs></svg><svg class="a" style="left:2182px;top:292px" width="199" height="121"><defs><clipPath id="c2182292"><rect width="199" height="121" rx="7"/></clipPath></defs><g clip-path="url(#c2182292)"><rect width="199" height="121" fill="#f3f4f7"/><rect x="7" y="6" width="52" height="4" rx="1" fill="#555" opacity="0.8"/><rect x="160" y="8" width="32" height="2" fill="#555" opacity="0.5"/><rect x="6" y="15" width="187" height="12" rx="2" fill="#ffffff"/><rect x="9" y="21" width="28" height="3" fill="#666" opacity="0.35"/><rect x="42" y="21" width="28" height="3" fill="#666" opacity="0.35"/><rect x="75" y="21" width="28" height="3" fill="#666" opacity="0.35"/><rect x="108" y="21" width="28" height="3" fill="#666" opacity="0.35"/><rect x="141" y="21" width="28" height="3" fill="#666" opacity="0.35"/><rect x="181" y="18" width="9" height="6" rx="1" fill="#3b82f6"/><rect x="6" y="30" width="187" height="91" rx="2" fill="#ffffff"/><rect x="10" y="34" width="10" height="2" fill="#666" opacity="0.6"/><rect x="25" y="34" width="7" height="2" fill="#3b82f6"/><rect x="38" y="34" width="7" height="2" fill="#666" opacity="0.5"/><rect x="11" y="45" width="60" height="2" fill="#666" opacity="0.55"/><rect x="104" y="45" width="60" height="2" fill="#666" opacity="0.55"/><rect x="22" y="52.0" width="36" height="1.6" fill="#3b82f6"/><rect x="22" y="53.7" width="2" height="1" fill="#f97316"/><rect x="22" y="56.5" width="48" height="1.6" fill="#3b82f6"/><rect x="22" y="58.2" width="2" height="1" fill="#f97316"/><rect x="22" y="61.0" width="18" height="1.6" fill="#3b82f6"/><rect x="22" y="62.7" width="2" height="1" fill="#f97316"/><rect x="22" y="65.5" width="48" height="1.6" fill="#3b82f6"/><rect x="22" y="67.2" width="2" height="1" fill="#f97316"/><rect x="22" y="70.0" width="64" height="1.6" fill="#3b82f6"/><rect x="22" y="71.7" width="2" height="1" fill="#f97316"/><rect x="22" y="74.5" width="19" height="1.6" fill="#3b82f6"/><rect x="22" y="76.2" width="2" height="1" fill="#f97316"/><rect x="22" y="79.0" width="9" height="1.6" fill="#3b82f6"/><rect x="22" y="80.7" width="2" height="1" fill="#f97316"/><path d="M146,72 L146.00,60.00 A12,12 0 0 1 157.28,67.90 Z" fill="#3b82f6"/><path d="M146,72 L157.28,67.90 A12,12 0 0 1 153.71,81.19 Z" fill="#f97316"/><path d="M146,72 L153.71,81.19 A12,12 0 0 1 147.05,83.95 Z" fill="#14b8c6"/><path d="M146,72 L147.05,83.95 A12,12 0 0 1 136.81,79.71 Z" fill="#8b5cf6"/><path d="M146,72 L136.81,79.71 A12,12 0 0 1 135.61,66.00 Z" fill="#6ba3d6"/><path d="M146,72 L135.61,66.00 A12,12 0 0 1 141.90,60.72 Z" fill="#f5b82e"/><path d="M146,72 L141.90,60.72 A12,12 0 0 1 146.00,60.00 Z" fill="#e26a6a"/><rect x="6" y="106" width="187" height="20" rx="2" fill="#ffffff"/><rect x="10" y="110" width="12" height="2" fill="#666" opacity="0.6"/><rect x="10" y="116" width="8" height="1.5" fill="#666" opacity="0.4"/><rect x="60" y="116" width="14" height="1.5" fill="#666" opacity="0.4"/><rect x="120" y="116" width="14" height="1.5" fill="#666" opacity="0.4"/><rect x="170" y="116" width="14" height="1.5" fill="#666" opacity="0.4"/><rect x="0" y="85" width="199" height="36" fill="rgba(120,120,122,0.8)"/></g></svg><svg class="a" style="left:2397px;top:292px" width="199" height="121"><defs><clipPath id="c2397292"><rect width="199" height="121" rx="7"/></clipPath></defs><g clip-path="url(#c2397292)"><rect width="199" height="121" fill="url(#gNv)"/><rect x="73.5" y="6" width="52" height="4" rx="1" fill="#ccd" opacity="0.8"/><rect x="160" y="8" width="32" height="2" fill="#ccd" opacity="0.5"/><rect x="6" y="15" width="187" height="12" rx="2" fill="#1d2461"/><rect x="9" y="21" width="28" height="3" fill="#aab" opacity="0.35"/><rect x="42" y="21" width="28" height="3" fill="#aab" opacity="0.35"/><rect x="75" y="21" width="28" height="3" fill="#aab" opacity="0.35"/><rect x="108" y="21" width="28" height="3" fill="#aab" opacity="0.35"/><rect x="141" y="21" width="28" height="3" fill="#aab" opacity="0.35"/><rect x="181" y="18" width="9" height="6" rx="1" fill="#4a78e0"/><rect x="6" y="30" width="187" height="91" rx="2" fill="#1d2461"/><rect x="10" y="34" width="10" height="2" fill="#aab" opacity="0.6"/><rect x="25" y="34" width="7" height="2" fill="#4a78e0"/><rect x="38" y="34" width="7" height="2" fill="#aab" opacity="0.5"/><rect x="11" y="45" width="60" height="2" fill="#aab" opacity="0.55"/><rect x="104" y="45" width="60" height="2" fill="#aab" opacity="0.55"/><rect x="22" y="52.0" width="36" height="1.6" fill="#4a78e0"/><rect x="22" y="53.7" width="2" height="1" fill="#3b9af0"/><rect x="22" y="56.5" width="48" height="1.6" fill="#4a78e0"/><rect x="22" y="58.2" width="2" height="1" fill="#3b9af0"/><rect x="22" y="61.0" width="18" height="1.6" fill="#4a78e0"/><rect x="22" y="62.7" width="2" height="1" fill="#3b9af0"/><rect x="22" y="65.5" width="48" height="1.6" fill="#4a78e0"/><rect x="22" y="67.2" width="2" height="1" fill="#3b9af0"/><rect x="22" y="70.0" width="64" height="1.6" fill="#4a78e0"/><rect x="22" y="71.7" width="2" height="1" fill="#3b9af0"/><rect x="22" y="74.5" width="19" height="1.6" fill="#4a78e0"/><rect x="22" y="76.2" width="2" height="1" fill="#3b9af0"/><rect x="22" y="79.0" width="9" height="1.6" fill="#4a78e0"/><rect x="22" y="80.7" width="2" height="1" fill="#3b9af0"/><path d="M146,72 L146.00,60.00 A12,12 0 0 1 157.28,67.90 Z" fill="#3b82f6"/><path d="M146,72 L157.28,67.90 A12,12 0 0 1 153.71,81.19 Z" fill="#f97316"/><path d="M146,72 L153.71,81.19 A12,12 0 0 1 147.05,83.95 Z" fill="#14b8c6"/><path d="M146,72 L147.05,83.95 A12,12 0 0 1 136.81,79.71 Z" fill="#8b5cf6"/><path d="M146,72 L136.81,79.71 A12,12 0 0 1 135.61,66.00 Z" fill="#6ba3d6"/><path d="M146,72 L135.61,66.00 A12,12 0 0 1 141.90,60.72 Z" fill="#f5b82e"/><path d="M146,72 L141.90,60.72 A12,12 0 0 1 146.00,60.00 Z" fill="#e26a6a"/><rect x="6" y="106" width="187" height="20" rx="2" fill="#1d2461"/><rect x="10" y="110" width="12" height="2" fill="#aab" opacity="0.6"/><rect x="10" y="116" width="8" height="1.5" fill="#aab" opacity="0.4"/><rect x="60" y="116" width="14" height="1.5" fill="#aab" opacity="0.4"/><rect x="120" y="116" width="14" height="1.5" fill="#aab" opacity="0.4"/><rect x="170" y="116" width="14" height="1.5" fill="#aab" opacity="0.4"/><rect x="0" y="85" width="199" height="36" fill="rgba(14,16,50,0.6)"/></g></svg><svg class="a" style="left:2612px;top:292px" width="199" height="121"><defs><clipPath id="c2612292"><rect width="199" height="121" rx="7"/></clipPath></defs><g clip-path="url(#c2612292)"><rect width="199" height="121" fill="#0e0d28"/><rect x="7" y="6" width="52" height="4" rx="1" fill="#ccd" opacity="0.8"/><rect x="160" y="8" width="32" height="2" fill="#ccd" opacity="0.5"/><rect x="6" y="15" width="187" height="12" rx="2" fill="#100f2c"/><rect x="9" y="21" width="28" height="3" fill="#99a" opacity="0.35"/><rect x="42" y="21" width="28" height="3" fill="#99a" opacity="0.35"/><rect x="75" y="21" width="28" height="3" fill="#99a" opacity="0.35"/><rect x="108" y="21" width="28" height="3" fill="#99a" opacity="0.35"/><rect x="141" y="21" width="28" height="3" fill="#99a" opacity="0.35"/><rect x="181" y="18" width="9" height="6" rx="1" fill="#2f7ef0"/><rect x="6" y="30" width="187" height="91" rx="2" fill="#100f2c"/><rect x="10" y="34" width="10" height="2" fill="#99a" opacity="0.6"/><rect x="25" y="34" width="7" height="2" fill="#2f7ef0"/><rect x="38" y="34" width="7" height="2" fill="#99a" opacity="0.5"/><rect x="11" y="45" width="60" height="2" fill="#99a" opacity="0.55"/><rect x="104" y="45" width="60" height="2" fill="#99a" opacity="0.55"/><rect x="22" y="52.0" width="36" height="1.6" fill="#2f7ef0"/><rect x="22" y="53.7" width="2" height="1" fill="#f97316"/><rect x="22" y="56.5" width="48" height="1.6" fill="#2f7ef0"/><rect x="22" y="58.2" width="2" height="1" fill="#f97316"/><rect x="22" y="61.0" width="18" height="1.6" fill="#2f7ef0"/><rect x="22" y="62.7" width="2" height="1" fill="#f97316"/><rect x="22" y="65.5" width="48" height="1.6" fill="#2f7ef0"/><rect x="22" y="67.2" width="2" height="1" fill="#f97316"/><rect x="22" y="70.0" width="64" height="1.6" fill="#2f7ef0"/><rect x="22" y="71.7" width="2" height="1" fill="#f97316"/><rect x="22" y="74.5" width="19" height="1.6" fill="#2f7ef0"/><rect x="22" y="76.2" width="2" height="1" fill="#f97316"/><rect x="22" y="79.0" width="9" height="1.6" fill="#2f7ef0"/><rect x="22" y="80.7" width="2" height="1" fill="#f97316"/><path d="M146,72 L146.00,60.00 A12,12 0 0 1 157.28,67.90 Z" fill="#3b82f6"/><path d="M146,72 L157.28,67.90 A12,12 0 0 1 153.71,81.19 Z" fill="#f97316"/><path d="M146,72 L153.71,81.19 A12,12 0 0 1 147.05,83.95 Z" fill="#14b8c6"/><path d="M146,72 L147.05,83.95 A12,12 0 0 1 136.81,79.71 Z" fill="#8b5cf6"/><path d="M146,72 L136.81,79.71 A12,12 0 0 1 135.61,66.00 Z" fill="#6ba3d6"/><path d="M146,72 L135.61,66.00 A12,12 0 0 1 141.90,60.72 Z" fill="#f5b82e"/><path d="M146,72 L141.90,60.72 A12,12 0 0 1 146.00,60.00 Z" fill="#e26a6a"/><rect x="6" y="106" width="187" height="20" rx="2" fill="#100f2c"/><rect x="10" y="110" width="12" height="2" fill="#99a" opacity="0.6"/><rect x="10" y="116" width="8" height="1.5" fill="#99a" opacity="0.4"/><rect x="60" y="116" width="14" height="1.5" fill="#99a" opacity="0.4"/><rect x="120" y="116" width="14" height="1.5" fill="#99a" opacity="0.4"/><rect x="170" y="116" width="14" height="1.5" fill="#99a" opacity="0.4"/><rect x="0" y="85" width="199" height="36" fill="rgba(5,5,20,0.55)"/></g></svg><svg class="a" style="left:2182px;top:422px" width="199" height="120"><defs><clipPath id="c2182422"><rect width="199" height="120" rx="7"/></clipPath></defs><g clip-path="url(#c2182422)"><rect width="199" height="120" fill="url(#gBl)"/><rect x="73.5" y="6" width="52" height="4" rx="1" fill="#dde" opacity="0.8"/><rect x="160" y="8" width="32" height="2" fill="#dde" opacity="0.5"/><rect x="6" y="15" width="187" height="12" rx="2" fill="#ffffff"/><rect x="9" y="21" width="28" height="3" fill="#666" opacity="0.35"/><rect x="42" y="21" width="28" height="3" fill="#666" opacity="0.35"/><rect x="75" y="21" width="28" height="3" fill="#666" opacity="0.35"/><rect x="108" y="21" width="28" height="3" fill="#666" opacity="0.35"/><rect x="141" y="21" width="28" height="3" fill="#666" opacity="0.35"/><rect x="181" y="18" width="9" height="6" rx="1" fill="#62a8f0"/><rect x="6" y="30" width="187" height="90" rx="2" fill="#ffffff"/><rect x="10" y="34" width="10" height="2" fill="#666" opacity="0.6"/><rect x="25" y="34" width="7" height="2" fill="#62a8f0"/><rect x="38" y="34" width="7" height="2" fill="#666" opacity="0.5"/><rect x="11" y="45" width="60" height="2" fill="#666" opacity="0.55"/><rect x="104" y="45" width="60" height="2" fill="#666" opacity="0.55"/><rect x="22" y="52.0" width="36" height="1.6" fill="#62a8f0"/><rect x="22" y="53.7" width="2" height="1" fill="#6fd3c8"/><rect x="22" y="56.5" width="48" height="1.6" fill="#62a8f0"/><rect x="22" y="58.2" width="2" height="1" fill="#6fd3c8"/><rect x="22" y="61.0" width="18" height="1.6" fill="#62a8f0"/><rect x="22" y="62.7" width="2" height="1" fill="#6fd3c8"/><rect x="22" y="65.5" width="48" height="1.6" fill="#62a8f0"/><rect x="22" y="67.2" width="2" height="1" fill="#6fd3c8"/><rect x="22" y="70.0" width="64" height="1.6" fill="#62a8f0"/><rect x="22" y="71.7" width="2" height="1" fill="#6fd3c8"/><rect x="22" y="74.5" width="19" height="1.6" fill="#62a8f0"/><rect x="22" y="76.2" width="2" height="1" fill="#6fd3c8"/><rect x="22" y="79.0" width="9" height="1.6" fill="#62a8f0"/><rect x="22" y="80.7" width="2" height="1" fill="#6fd3c8"/><path d="M146,72 L146.00,60.00 A12,12 0 0 1 157.28,67.90 Z" fill="#3b82f6"/><path d="M146,72 L157.28,67.90 A12,12 0 0 1 153.71,81.19 Z" fill="#f97316"/><path d="M146,72 L153.71,81.19 A12,12 0 0 1 147.05,83.95 Z" fill="#14b8c6"/><path d="M146,72 L147.05,83.95 A12,12 0 0 1 136.81,79.71 Z" fill="#8b5cf6"/><path d="M146,72 L136.81,79.71 A12,12 0 0 1 135.61,66.00 Z" fill="#6ba3d6"/><path d="M146,72 L135.61,66.00 A12,12 0 0 1 141.90,60.72 Z" fill="#f5b82e"/><path d="M146,72 L141.90,60.72 A12,12 0 0 1 146.00,60.00 Z" fill="#e26a6a"/><rect x="6" y="105" width="187" height="20" rx="2" fill="#ffffff"/><rect x="10" y="109" width="12" height="2" fill="#666" opacity="0.6"/><rect x="10" y="115" width="8" height="1.5" fill="#666" opacity="0.4"/><rect x="60" y="115" width="14" height="1.5" fill="#666" opacity="0.4"/><rect x="120" y="115" width="14" height="1.5" fill="#666" opacity="0.4"/><rect x="170" y="115" width="14" height="1.5" fill="#666" opacity="0.4"/><rect x="0" y="84" width="199" height="36" fill="rgba(120,120,122,0.78)"/></g></svg><svg class="a" style="left:2397px;top:422px" width="199" height="120"><defs><clipPath id="c2397422"><rect width="199" height="120" rx="7"/></clipPath></defs><g clip-path="url(#c2397422)"><rect width="199" height="120" fill="url(#gOr)"/><rect x="73.5" y="6" width="52" height="4" rx="1" fill="#fee" opacity="0.8"/><rect x="160" y="8" width="32" height="2" fill="#fee" opacity="0.5"/><rect x="6" y="15" width="187" height="12" rx="2" fill="#ffffff"/><rect x="9" y="21" width="28" height="3" fill="#777" opacity="0.35"/><rect x="42" y="21" width="28" height="3" fill="#777" opacity="0.35"/><rect x="75" y="21" width="28" height="3" fill="#777" opacity="0.35"/><rect x="108" y="21" width="28" height="3" fill="#777" opacity="0.35"/><rect x="141" y="21" width="28" height="3" fill="#777" opacity="0.35"/><rect x="181" y="18" width="9" height="6" rx="1" fill="#f6a13a"/><rect x="6" y="30" width="187" height="90" rx="2" fill="#ffffff"/><rect x="10" y="34" width="10" height="2" fill="#777" opacity="0.6"/><rect x="25" y="34" width="7" height="2" fill="#f6a13a"/><rect x="38" y="34" width="7" height="2" fill="#777" opacity="0.5"/><rect x="11" y="45" width="60" height="2" fill="#777" opacity="0.55"/><rect x="104" y="45" width="60" height="2" fill="#777" opacity="0.55"/><rect x="22" y="52.0" width="36" height="1.6" fill="#f6a13a"/><rect x="22" y="53.7" width="2" height="1" fill="#f6c13a"/><rect x="22" y="56.5" width="48" height="1.6" fill="#f6a13a"/><rect x="22" y="58.2" width="2" height="1" fill="#f6c13a"/><rect x="22" y="61.0" width="18" height="1.6" fill="#f6a13a"/><rect x="22" y="62.7" width="2" height="1" fill="#f6c13a"/><rect x="22" y="65.5" width="48" height="1.6" fill="#f6a13a"/><rect x="22" y="67.2" width="2" height="1" fill="#f6c13a"/><rect x="22" y="70.0" width="64" height="1.6" fill="#f6a13a"/><rect x="22" y="71.7" width="2" height="1" fill="#f6c13a"/><rect x="22" y="74.5" width="19" height="1.6" fill="#f6a13a"/><rect x="22" y="76.2" width="2" height="1" fill="#f6c13a"/><rect x="22" y="79.0" width="9" height="1.6" fill="#f6a13a"/><rect x="22" y="80.7" width="2" height="1" fill="#f6c13a"/><path d="M146,72 L146.00,60.00 A12,12 0 0 1 157.28,67.90 Z" fill="#3b82f6"/><path d="M146,72 L157.28,67.90 A12,12 0 0 1 153.71,81.19 Z" fill="#f97316"/><path d="M146,72 L153.71,81.19 A12,12 0 0 1 147.05,83.95 Z" fill="#14b8c6"/><path d="M146,72 L147.05,83.95 A12,12 0 0 1 136.81,79.71 Z" fill="#8b5cf6"/><path d="M146,72 L136.81,79.71 A12,12 0 0 1 135.61,66.00 Z" fill="#6ba3d6"/><path d="M146,72 L135.61,66.00 A12,12 0 0 1 141.90,60.72 Z" fill="#f5b82e"/><path d="M146,72 L141.90,60.72 A12,12 0 0 1 146.00,60.00 Z" fill="#e26a6a"/><rect x="6" y="105" width="187" height="20" rx="2" fill="#ffffff"/><rect x="10" y="109" width="12" height="2" fill="#777" opacity="0.6"/><rect x="10" y="115" width="8" height="1.5" fill="#777" opacity="0.4"/><rect x="60" y="115" width="14" height="1.5" fill="#777" opacity="0.4"/><rect x="120" y="115" width="14" height="1.5" fill="#777" opacity="0.4"/><rect x="170" y="115" width="14" height="1.5" fill="#777" opacity="0.4"/><rect x="0" y="84" width="199" height="36" fill="rgba(120,120,122,0.78)"/></g></svg><svg class="a" style="left:2611px;top:421px" width="201" height="122"><defs><clipPath id="c2611421"><rect width="201" height="122" rx="7"/></clipPath></defs><g clip-path="url(#c2611421)"><rect width="201" height="122" fill="#eff1f6"/><rect x="74.5" y="6" width="52" height="4" rx="1" fill="#555" opacity="0.8"/><rect x="160" y="8" width="32" height="2" fill="#555" opacity="0.5"/><rect x="6" y="15" width="189" height="12" rx="2" fill="#ffffff"/><rect x="9" y="21" width="28" height="3" fill="#666" opacity="0.35"/><rect x="42" y="21" width="28" height="3" fill="#666" opacity="0.35"/><rect x="75" y="21" width="28" height="3" fill="#666" opacity="0.35"/><rect x="108" y="21" width="28" height="3" fill="#666" opacity="0.35"/><rect x="141" y="21" width="28" height="3" fill="#666" opacity="0.35"/><rect x="183" y="18" width="9" height="6" rx="1" fill="#5b9bf0"/><rect x="6" y="30" width="189" height="92" rx="2" fill="#ffffff"/><rect x="10" y="34" width="10" height="2" fill="#666" opacity="0.6"/><rect x="25" y="34" width="7" height="2" fill="#5b9bf0"/><rect x="38" y="34" width="7" height="2" fill="#666" opacity="0.5"/><rect x="11" y="45" width="60" height="2" fill="#666" opacity="0.55"/><rect x="104" y="45" width="60" height="2" fill="#666" opacity="0.55"/><rect x="22" y="52.0" width="36" height="1.6" fill="#5b9bf0"/><rect x="22" y="53.7" width="2" height="1" fill="#3bc0c0"/><rect x="22" y="56.5" width="48" height="1.6" fill="#5b9bf0"/><rect x="22" y="58.2" width="2" height="1" fill="#3bc0c0"/><rect x="22" y="61.0" width="18" height="1.6" fill="#5b9bf0"/><rect x="22" y="62.7" width="2" height="1" fill="#3bc0c0"/><rect x="22" y="65.5" width="48" height="1.6" fill="#5b9bf0"/><rect x="22" y="67.2" width="2" height="1" fill="#3bc0c0"/><rect x="22" y="70.0" width="64" height="1.6" fill="#5b9bf0"/><rect x="22" y="71.7" width="2" height="1" fill="#3bc0c0"/><rect x="22" y="74.5" width="19" height="1.6" fill="#5b9bf0"/><rect x="22" y="76.2" width="2" height="1" fill="#3bc0c0"/><rect x="22" y="79.0" width="9" height="1.6" fill="#5b9bf0"/><rect x="22" y="80.7" width="2" height="1" fill="#3bc0c0"/><path d="M146,72 L146.00,60.00 A12,12 0 0 1 157.28,67.90 Z" fill="#3b82f6"/><path d="M146,72 L157.28,67.90 A12,12 0 0 1 153.71,81.19 Z" fill="#f97316"/><path d="M146,72 L153.71,81.19 A12,12 0 0 1 147.05,83.95 Z" fill="#14b8c6"/><path d="M146,72 L147.05,83.95 A12,12 0 0 1 136.81,79.71 Z" fill="#8b5cf6"/><path d="M146,72 L136.81,79.71 A12,12 0 0 1 135.61,66.00 Z" fill="#6ba3d6"/><path d="M146,72 L135.61,66.00 A12,12 0 0 1 141.90,60.72 Z" fill="#f5b82e"/><path d="M146,72 L141.90,60.72 A12,12 0 0 1 146.00,60.00 Z" fill="#e26a6a"/><rect x="6" y="107" width="189" height="20" rx="2" fill="#ffffff"/><rect x="10" y="111" width="12" height="2" fill="#666" opacity="0.6"/><rect x="10" y="117" width="8" height="1.5" fill="#666" opacity="0.4"/><rect x="60" y="117" width="14" height="1.5" fill="#666" opacity="0.4"/><rect x="120" y="117" width="14" height="1.5" fill="#666" opacity="0.4"/><rect x="170" y="117" width="14" height="1.5" fill="#666" opacity="0.4"/><rect x="0" y="86" width="201" height="36" fill="rgba(104,140,246,0.93)"/></g><rect x="1" y="1" width="199" height="120" rx="7" fill="none" stroke="#5b8cf7" stroke-width="2"/></svg>
<div class="a" style="left:2182px;top:379px;color:#fff;font-size:22px;line-height:30px;text-align:center;width:199px">默认</div>
<div class="a" style="left:2397px;top:379px;color:#fff;font-size:22px;line-height:30px;text-align:center;width:199px">深蓝</div>
<div class="a" style="left:2612px;top:379px;color:#fff;font-size:22px;line-height:30px;text-align:center;width:199px">星空</div>
<div class="a" style="left:2182px;top:509px;color:#fff;font-size:22px;line-height:30px;text-align:center;width:199px">科技</div>
<div class="a" style="left:2397px;top:509px;color:#fff;font-size:22px;line-height:30px;text-align:center;width:199px">活动</div>
<div class="a" style="left:2705px;top:509px;color:#fff;font-size:22px;line-height:30px">简约</div>
<svg class="a" style="left:2675px;top:515px" width="24" height="19"><path d="M9.5,0.5 L0.5,8 L9.5,15.5 V10.8 C15.5,10.6 19.5,12.5 23,18.5 C22.3,11 17.5,5.5 9.5,5.2 Z" fill="#fff"/></svg>
<div class="a" style="left:2291px;top:16.5px;color:#fff;font-size:25px;font-weight:bold;line-height:36px">主题</div>
<div class="a" style="left:2634px;top:16px;color:#a8a9ad;font-size:25px;line-height:36px">高级</div>
<div class="a" style="left:2199px;top:92px;color:#7d7e83;font-size:24px;line-height:30px">搜索</div>
<div class="a" style="left:2181px;top:172px;color:#ececee;font-size:22px;font-weight:bold;line-height:30px">仪表板主题</div>
<div class="a" style="left:2146px;top:225px;color:#f2f2f4;font-size:21px;font-weight:bold;line-height:30px">官方</div>
<div class="a" style="left:2231px;top:225px;color:#9d9ea2;font-size:21px;line-height:30px">自定义</div>
<div class="a" style="left:2794px;top:225px;color:#d2d3d5;font-size:21px;line-height:30px">自定义</div>
<div class="a" style="left:2466px;top:589px;color:#e4e5e8;font-size:25px;line-height:32px">智能美化</div>
<div class="a" style="left:2181px;top:671px;color:#ececee;font-size:22px;font-weight:bold;line-height:30px">全局样式</div>
<div class="a" style="left:2145px;top:730.5px;color:#c6c7ca;font-size:22px;line-height:30px;-webkit-text-stroke:0.25px #c6c7ca">主题模式</div>
<div class="a" style="left:2282px;top:730.5px;color:#c6c7ca;font-size:22px;line-height:30px;-webkit-text-stroke:0.25px #c6c7ca">浅色模式</div>
<div class="a" style="left:2419px;top:730.5px;color:#c6c7ca;font-size:22px;line-height:30px;-webkit-text-stroke:0.25px #c6c7ca">深色模式</div>
<div class="a" style="left:2145px;top:788px;color:#c6c7ca;font-size:22px;line-height:30px;-webkit-text-stroke:0.25px #c6c7ca">图表色系</div>
<div class="a" style="left:2443px;top:787.5px;color:#d3d4d7;font-size:22px;line-height:30px">简约</div>
<div class="a" style="left:2779.5px;top:786.5px;color:#d3d4d7;font-size:22px;line-height:30px">自定义</div>
<div class="a" style="left:2282px;top:845px;color:#c6c7ca;font-size:22px;line-height:30px;-webkit-text-stroke:0.25px #c6c7ca">渐变色彩样式</div>
<div class="a" style="left:2145px;top:903.5px;color:#c6c7ca;font-size:22px;line-height:30px;-webkit-text-stroke:0.25px #c6c7ca">页面字体</div>
<div class="a" style="left:2256px;top:903.5px;color:#d3d4d7;font-size:22px;line-height:30px">系统默认</div>
<div class="a" style="left:2145px;top:961px;color:#c6c7ca;font-size:22px;line-height:30px;-webkit-text-stroke:0.25px #c6c7ca">卡片圆角</div>
<div class="a" style="left:2282px;top:961px;color:#c6c7ca;font-size:22px;line-height:30px;-webkit-text-stroke:0.25px #c6c7ca">无</div>
<div class="a" style="left:2354px;top:961px;color:#c6c7ca;font-size:22px;line-height:30px;-webkit-text-stroke:0.25px #c6c7ca">小</div>
<div class="a" style="left:2425px;top:961px;color:#c6c7ca;font-size:22px;line-height:30px;-webkit-text-stroke:0.25px #c6c7ca">大</div>
<div class="a" style="left:2188px;top:1019px;color:#c6c7ca;font-size:22px;line-height:30px;-webkit-text-stroke:0.25px #c6c7ca">间距</div>
<div class="a" style="left:2282px;top:1019px;color:#c6c7ca;font-size:22px;line-height:30px;-webkit-text-stroke:0.25px #c6c7ca">紧凑</div>
<div class="a" style="left:2376px;top:1019px;color:#c6c7ca;font-size:22px;line-height:30px;-webkit-text-stroke:0.25px #c6c7ca">常规</div>
<div class="a" style="left:2470px;top:1019px;color:#c6c7ca;font-size:22px;line-height:30px;-webkit-text-stroke:0.25px #c6c7ca">自定义</div>
<div class="a" style="left:2167px;top:1094.5px;color:#c6c7ca;font-size:22px;line-height:30px;-webkit-text-stroke:0.25px #c6c7ca">卡片间间距</div>
<div class="a" style="left:2289px;top:1094.5px;color:#c6c7ca;font-size:22px;line-height:30px;-webkit-text-stroke:0.25px #c6c7ca">行间距</div>
<div class="a" style="left:2508px;top:1094.5px;color:#c6c7ca;font-size:22px;line-height:30px;-webkit-text-stroke:0.25px #c6c7ca">列间距</div>
<div class="a" style="left:2420px;top:1093px;color:#d8d9dc;font-size:23px;line-height:30px">16</div>
<div class="a" style="left:2463px;top:1093px;color:#d8d9dc;font-size:23px;line-height:30px">px</div>
<div class="a" style="left:2640px;top:1093px;color:#d8d9dc;font-size:23px;line-height:30px">16</div>
<div class="a" style="left:2682px;top:1093px;color:#d8d9dc;font-size:23px;line-height:30px">px</div>
<div class="a" style="left:2145px;top:1062px;width:713px;height:98px;overflow:hidden"><div class="a" style="left:22px;top:87px;color:#c3c4c7;font-size:22px;line-height:30px">卡片内边距</div></div>
</body></html>
